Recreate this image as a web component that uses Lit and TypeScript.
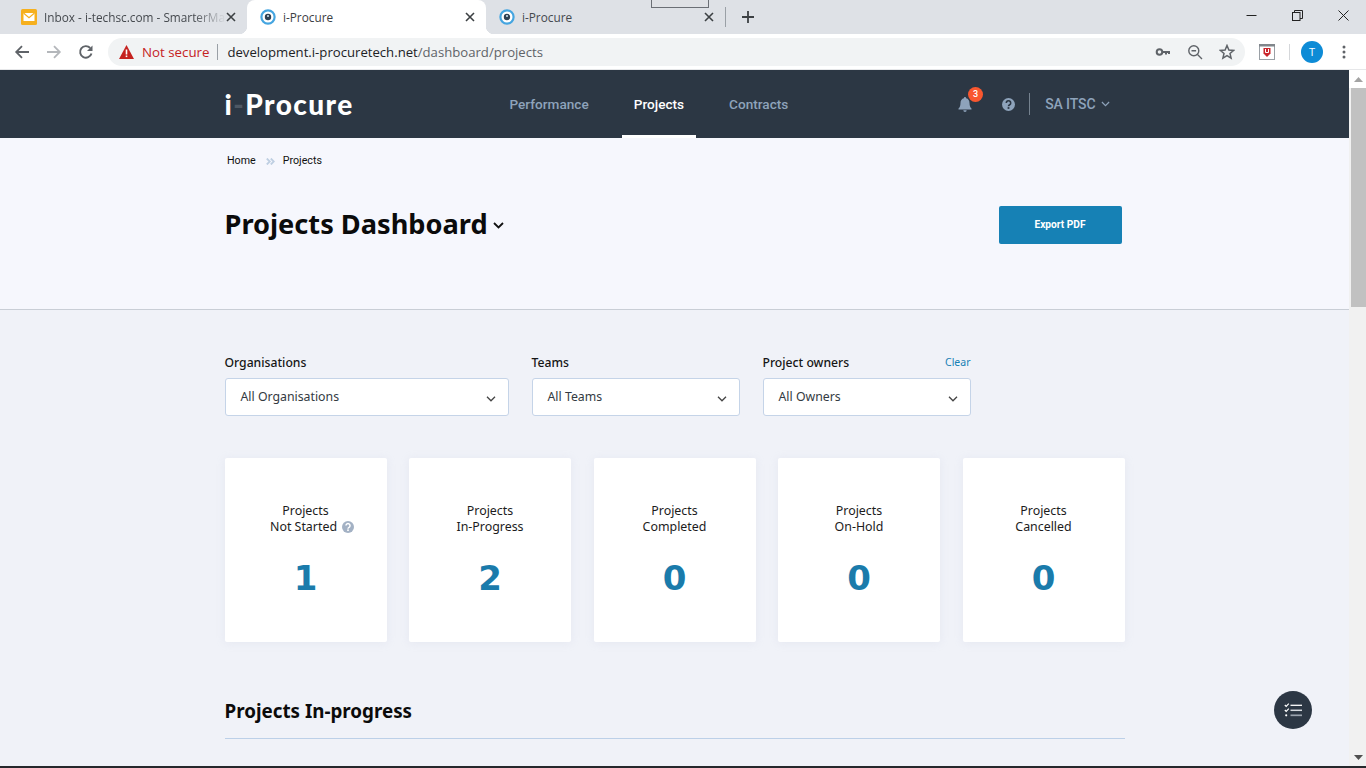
import { LitElement, html, css, svg } from "lit";
import { customElement } from "lit/decorators.js";

const chev = (c: string, w = 10) => html`<svg width="${w}" height="6" viewBox="0 0 10 6" fill="none" stroke="${c}" stroke-width="1.3"><path d="M1 .8 5 4.8 9 .8"/></svg>`;
const favicon = html`<svg width="16" height="16" viewBox="0 0 16 16"><circle cx="8" cy="8" r="6.6" fill="#fff" stroke="#45a5e0" stroke-width="2.2"/><circle cx="8" cy="8" r="3.2" fill="#2f4052"/><circle cx="8" cy="7" r="1" fill="#cfe4f2"/></svg>`;
const closeX = html`<svg width="10" height="10" viewBox="0 0 10 10" stroke="#3c4043" stroke-width="1.6"><path d="M1 1l8 8M9 1 1 9"/></svg>`;
const helpGlyph = svg`<path d="M5.300 6.100a2.700 2.700 0 1 1 4.100 2.300c-.9.500-1.400.9-1.400 1.800" fill="none" stroke="currentColor" stroke-width="2"/><rect x="6.900" y="11.200" width="2.200" height="2.200" fill="currentColor"/>`;

const cards = [
  ["Projects", "Not Started", "1", true],
  ["Projects", "In-Progress", "2", false],
  ["Projects", "Completed", "0", false],
  ["Projects", "On-Hold", "0", false],
  ["Projects", "Cancelled", "0", false],
] as const;

@customElement("app-root")
export class AppRoot extends LitElement {
  static styles = css`
    :host { display: block; height: 768px; width: 1366px; overflow: hidden; position: relative; font-family: "Noto Sans", sans-serif; color: #111; background: #f0f2f8; }
    * { box-sizing: border-box; }
    .shell { display: flex; flex-direction: column; height: 768px; }

    .tabstrip { height: 34px; background: #dee1e6; display: flex; align-items: stretch; padding-left: 8px; flex: none; }
    .tab { width: 239px; display: flex; align-items: center; padding: 0 11px 0 12.500px; font: 11.800px "Open Sans", sans-serif; color: #45494e; position: relative; }
    .tab.active { background: #fff; color: #3c4043; border-radius: 8px 8px 0 0; }
    .tab.active::before, .tab.active::after { content: ""; position: absolute; bottom: 0; width: 8px; height: 8px; }
    .tab.active::before { left: -8px; background: radial-gradient(circle at 0 0, transparent 8px, #fff 8.500px); }
    .tab.active::after { right: -8px; background: radial-gradient(circle at 100% 0, transparent 8px, #fff 8.500px); }
    .tab-title { flex: 1; margin-left: 7.500px; white-space: nowrap; overflow: hidden; }
    .tab-title.fade { -webkit-mask-image: linear-gradient(90deg, #000 82%, transparent 100%); mask-image: linear-gradient(90deg, #000 82%, transparent 100%); }
    .tab-sep { width: 1px; height: 20px; background: #9aa0a6; align-self: center; }
    .newtab { width: 44px; display: flex; align-items: center; justify-content: center; }
    .winctl { margin-left: auto; display: flex; align-items: flex-start; }
    .winctl span { width: 46px; height: 30px; display: flex; align-items: center; justify-content: center; }
    .ghost { position: absolute; left: 651px; top: -1px; width: 58px; height: 9px; border: 1px solid #6b6f75; background: #dfe1e5; }

    .toolbar { height: 36px; background: #fff; display: flex; align-items: center; padding-left: 13px; flex: none; border-bottom: 1px solid #e6e7e9; }
    .navbtn { width: 32px; height: 32px; display: flex; align-items: center; justify-content: center; }
    .toolbar .navbtn:first-child { margin-left: -7px; }
    .omni { width: 1137px; height: 28px; margin-left: 6px; border-radius: 14px; background: #f1f3f4; display: flex; align-items: center; padding-left: 11px; font: 14px "Open Sans", sans-serif; }
    .ns { color: #c5221f; margin-left: 8px; font-size: 13.300px; }
    .omni-sep { width: 1px; height: 16px; background: #9aa0a6; margin: 0 9px 0 8px; }
    .url { color: #202124; font-size: 13.150px; flex: 1; white-space: nowrap; }
    .url span { color: #5f6368; }
    .omni-icons { display: flex; align-items: center; gap: 16px; padding-right: 10px; }
    .tb-right { display: flex; align-items: center; margin-left: 14px; }
    .tb-sep { width: 1px; height: 16px; background: #d5d7da; margin: 0 11px 0 14px; }
    .avatar { width: 22px; height: 22px; border-radius: 50%; background: #0d8bd6; color: #fff; font: 11px "Open Sans", sans-serif; display: flex; align-items: center; justify-content: center; }
    .dots { margin-left: 19px; }

    .viewport { flex: 1; min-height: 0; display: flex; }
    .page { flex: 1; min-width: 0; overflow: hidden; }
    .scrollbar { width: 17px; background: #f1f1f1; display: flex; flex-direction: column; align-items: flex-end; }
    .sb-arrow { height: 18px; width: 100%; background: #fff; display: flex; align-items: center; justify-content: center; flex: none; padding-left: 2px; }
    .sb-arrow.down { background: #f1f1f1; margin-top: auto; }
    .sb-thumb { width: 15px; height: 219px; background: #c1c1c1; }
    .bottomline { height: 2px; background: #26282c; flex: none; }

    .wrap { width: 900px; margin: 0 auto; }
    header { height: 68px; background: #2c3744; }
    header .wrap { height: 100%; display: flex; align-items: center; }
    .logo { font: 900 28px "Lato", sans-serif; color: #fff; width: 273px; white-space: nowrap; letter-spacing: 1.450px; }
    .logo i { font-style: normal; color: #4e5864; }
    nav { display: flex; gap: 21px; height: 100%; }
    nav a { font: 500 13.600px "Roboto", sans-serif; color: #8ea3bb; display: flex; align-items: center; padding: 2px 12px 0; border-bottom: 3px solid transparent; }
    nav a.on { color: #fff; border-bottom-color: #fff; }
    .hright { margin-left: auto; display: flex; align-items: center; padding-right: 15px; color: #8ea3bb; }
    .bell { position: relative; display: flex; margin-right: 30px; }
    .badge { position: absolute; left: 10px; top: -10px; width: 15px; height: 15px; border-radius: 50%; background: #f9572f; color: #fff; font: 500 9px "Roboto", sans-serif; display: flex; align-items: center; justify-content: center; }
    .hsep { width: 1px; height: 22px; background: #75828f; margin: 0 15px 0 14px; }
    .user { font: 500 14px "Roboto", sans-serif; margin-right: 5px; letter-spacing: -.1px; }

    .band { height: 172px; background: #f6f7fd; border-bottom: 1px solid #c9ced6; }
    .crumbs { display: flex; align-items: center; padding: 16px 0 0 2.500px; font: 10.700px "Roboto", sans-serif; color: #111; height: 28px; }
    .crumbs svg { margin: 3px 8px 0 10px; }
    .titlerow { display: flex; align-items: flex-start; justify-content: space-between; padding-top: 40px; padding-right: 3px; }
    h1 { font: 700 27.200px "Noto Sans", sans-serif; margin: 0; color: #0b0b0b; display: flex; align-items: flex-start; gap: 5px; line-height: 36px; height: 38px; }
    h1 svg { margin-top: 16px; }
    .export { width: 123px; height: 38px; background: #1681b5; border-radius: 2px; color: #fff; font: 700 10.200px "Roboto", sans-serif; display: flex; align-items: center; justify-content: center; padding-bottom: 1px; }

    .filters { display: flex; gap: 23px; padding-top: 44px; }
    .f { display: flex; flex-direction: column; }
    .f label { font: 500 12.200px "Noto Sans", sans-serif; height: 24px; display: flex; justify-content: space-between; line-height: 18px; color: #161616; }
    .f label a { color: #1681b5; font-size: 10.500px; font-weight: 400; margin-top: -1px; }
    .sel { height: 38px; background: #fff; border: 1px solid #c5d4e8; border-radius: 3px; display: flex; align-items: center; justify-content: space-between; padding: 0 12px 2px 15px; font: 12.300px "Noto Sans", sans-serif; color: #333a42; }
    .sel svg { margin-top: 5px; }
    .w1 { width: 284px; } .w2 { width: 208px; }

    .cards { display: grid; grid-template-columns: repeat(5, 162px); gap: 22.500px; margin-top: 42px; }
    .card { height: 184px; background: #fff; border-radius: 2px; box-shadow: 0 1px 8px rgba(190,198,220,.22); display: flex; flex-direction: column; align-items: center; padding-top: 45px; font: 12.400px/16px "Noto Sans", sans-serif; color: #1c1c1c; text-align: center; }
    .l2 { display: flex; align-items: center; gap: 5px; }
    .l2.help { margin-left: 13px; }
    .num { font: 700 34px/40px "DejaVu Sans", sans-serif; color: #1a7bab; margin-top: 23px; }

    h2 { margin: 56px 0 0; font: 700 18.800px/26px "Noto Sans", sans-serif; color: #0b0b0b; padding-bottom: 14px; border-bottom: 1px solid #bcd0e8; }

    .fab { position: absolute; left: 1274px; top: 691px; width: 38px; height: 38px; border-radius: 50%; background: #2c3744; display: flex; align-items: center; justify-content: center; }
  `;

  render() {
    return html`
      <div class="shell">
        <div class="tabstrip">
          <div class="tab">
            <svg width="16" height="16" viewBox="0 0 16 16"><rect width="16" height="16" rx="1.500" fill="#f6b01e"/><rect x="2.500" y="4" width="11" height="8" fill="#fff"/><path d="M2.500 4 8 8.600 13.500 4" fill="none" stroke="#f6b01e" stroke-width="1.200"/></svg>
            <span class="tab-title fade">Inbox - i-techsc.com - SmarterMail</span>${closeX}
          </div>
          <div class="tab active">${favicon}<span class="tab-title">i-Procure</span>${closeX}</div>
          <div class="tab">${favicon}<span class="tab-title">i-Procure</span>${closeX}</div>
          <div class="tab-sep"></div>
          <div class="newtab"><svg width="14" height="14" viewBox="0 0 14 14" stroke="#3c4043" stroke-width="1.800"><path d="M7 1v12M1 7h12"/></svg></div>
          <div class="winctl">
            <span><svg width="11" height="11" viewBox="0 0 11 11" stroke="#222"><path d="M.5 5.500h10"/></svg></span>
            <span><svg width="11" height="11" viewBox="0 0 11 11" fill="none" stroke="#222"><rect x=".5" y="2.500" width="7.500" height="8"/><path d="M2.500 2.500v-2h8v8h-2.500"/></svg></span>
            <span><svg width="11" height="11" viewBox="0 0 11 11" stroke="#222"><path d="M.5.500l10 10M10.500.500l-10 10"/></svg></span>
          </div>
        </div>
        <div class="toolbar">
          <span class="navbtn"><svg width="16" height="16" viewBox="0 0 16 16" fill="none" stroke="#5f6368" stroke-width="1.800"><path d="M15 8H2.500M8 2.200 2.200 8 8 13.800"/></svg></span>
          <span class="navbtn"><svg width="16" height="16" viewBox="0 0 16 16" fill="none" stroke="#b4b7bb" stroke-width="1.800"><path d="M1 8h12.500M8 2.200 13.800 8 8 13.800"/></svg></span>
          <span class="navbtn"><svg width="16" height="16" viewBox="0 0 16 16" fill="none"><path d="M13.500 9.500A5.800 5.800 0 1 1 12.200 4" stroke="#5f6368" stroke-width="1.900"/><path d="M14.500 1.500v5.500H9z" fill="#5f6368"/></svg></span>
          <div class="omni">
            <svg width="15" height="14" viewBox="0 0 15 14"><path d="M7.500 0 15 14H0z" fill="#c5221f"/><rect x="6.700" y="4.500" width="1.600" height="5" fill="#fff"/><rect x="6.700" y="10.500" width="1.600" height="1.600" fill="#fff"/></svg>
            <span class="ns">Not secure</span><span class="omni-sep"></span>
            <span class="url">development.i-procuretech.net<span>/dashboard/projects</span></span>
            <div class="omni-icons">
              <svg width="16" height="16" viewBox="0 0 16 16" fill="none"><circle cx="4.500" cy="8" r="2.800" stroke="#5f6368" stroke-width="2"/><path d="M7 8h8M11 8v2.500M14 8v2" stroke="#5f6368" stroke-width="2"/></svg>
              <svg width="16" height="16" viewBox="0 0 16 16" fill="none" stroke="#5f6368" stroke-width="1.400"><circle cx="6.800" cy="6.800" r="5"/><path d="M10.500 10.500 15 15M4.500 6.800h4.600"/></svg>
              <svg width="16" height="16" viewBox="0 0 16 16" fill="none" stroke="#5f6368" stroke-width="1.500"><path d="M8 1.500 9.900 6l4.800.4-3.700 3.100 1.100 4.700L8 11.700l-4.100 2.500L5 9.500 1.300 6.400 6.100 6z"/></svg>
            </div>
          </div>
          <div class="tb-right">
            <svg width="16" height="16" viewBox="0 0 16 16"><rect x=".5" y=".5" width="15" height="15" fill="#fff" stroke="#9aa0a6"/><rect width="16" height="2.500" fill="#80868b"/><path d="M4.500 4H11.500V9.500L8 13 4.500 9.500z" fill="#c9252b"/><path d="M6.500 5v3.500h3V5" fill="none" stroke="#fff"/></svg>
            <span class="tb-sep"></span>
            <span class="avatar">T</span>
            <svg class="dots" width="4" height="14" viewBox="0 0 4 14" fill="#5f6368"><circle cx="2" cy="2" r="1.500"/><circle cx="2" cy="7" r="1.500"/><circle cx="2" cy="12" r="1.500"/></svg>
          </div>
        </div>
        <div class="viewport">
          <div class="page">
            <header><div class="wrap">
              <div class="logo">i<i>-</i>Procure</div>
              <nav><a>Performance</a><a class="on">Projects</a><a>Contracts</a></nav>
              <div class="hright">
                <span class="bell">
                  <svg width="14" height="15" viewBox="0 0 14 15" fill="#8ea3bb"><path d="M7 0a1.200 1.200 0 0 0-1.100 1.300C3.700 1.800 2.500 3.600 2.500 6c0 3-.9 4.500-2 5.500V12.500h13v-1c-1.100-1-2-2.500-2-5.500 0-2.400-1.200-4.200-3.400-4.700A1.200 1.200 0 0 0 7 0zM5.300 13.300a1.700 1.700 0 0 0 3.400 0z"/></svg>
                  <span class="badge">3</span>
                </span>
                <svg width="13" height="13" viewBox="0 0 16 16" style="color:#2c3744"><circle cx="8" cy="8" r="8" fill="#8ea3bb"/>${helpGlyph}</svg>
                <span class="hsep"></span>
                <span class="user">SA ITSC</span>${chev("#8ea3bb", 9)}
              </div>
            </div></header>
            <section class="band"><div class="wrap">
              <div class="crumbs">Home<svg width="9" height="7" viewBox="0 0 9 7" fill="none" stroke="#bfcfe2" stroke-width="1.800"><path d="M.8.500 3.800 3.500.8 6.500M4.800.500 7.800 3.500 4.800 6.500"/></svg>Projects</div>
              <div class="titlerow">
                <h1>Projects Dashboard <svg width="11" height="7" viewBox="0 0 11 7" fill="none" stroke="#111" stroke-width="1.800"><path d="M1 1l4.500 4.500L10 1"/></svg></h1>
                <div class="export">Export PDF</div>
              </div>
            </div></section>
            <div class="wrap">
              <div class="filters">
                <div class="f w1"><label>Organisations</label><div class="sel">All Organisations ${chev("#444")}</div></div>
                <div class="f w2"><label>Teams</label><div class="sel">All Teams ${chev("#444")}</div></div>
                <div class="f w2"><label>Project owners<a>Clear</a></label><div class="sel">All Owners ${chev("#444")}</div></div>
              </div>
              <div class="cards">
                ${cards.map(([a, b, n, help]) => html`<div class="card">
                  <div>${a}</div>
                  <div class="l2 ${help ? "help" : ""}">${b}${help ? html`<svg width="12" height="12" viewBox="0 0 16 16" style="color:#fff"><circle cx="8" cy="8" r="8" fill="#a3b1c4"/>${helpGlyph}</svg>` : ""}</div>
                  <div class="num">${n}</div>
                </div>`)}
              </div>
              <h2>Projects In-progress</h2>
            </div>
          </div>
          <div class="scrollbar">
            <div class="sb-arrow"><svg width="9" height="5" viewBox="0 0 9 5" fill="#a3a3a3"><path d="M4.500 0 9 5H0z"/></svg></div>
            <div class="sb-thumb"></div>
            <div class="sb-arrow down"><svg width="9" height="5" viewBox="0 0 9 5" fill="#505050"><path d="M0 0h9L4.500 5z"/></svg></div>
          </div>
        </div>
        <div class="bottomline"></div>
      </div>
      <div class="ghost"></div>
      <div class="fab"><svg width="18" height="14" viewBox="0 0 18 14" fill="none"><path d="M.8 2 2.200 3.300 4.800.6M.8 7 2.200 8.300 4.800 5.600" stroke="#fff" stroke-width="1.200"/><circle cx="2.200" cy="12.300" r="1.100" fill="#fff"/><path d="M6.500 2.300H18" stroke="#fff" stroke-width="1.300"/><path d="M6.500 7.300H18" stroke="#d6dadf" stroke-width="1.500"/><path d="M6.500 12.300H18" stroke="#9aa3ad" stroke-width="1.700"/></svg></div>
    `;
  }
}
